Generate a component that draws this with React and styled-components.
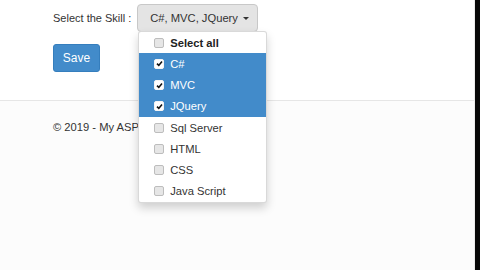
import styled, { createGlobalStyle } from "styled-components"

const skills = [
  { name: "C#", checked: true },
  { name: "MVC", checked: true },
  { name: "JQuery", checked: true },
  { name: "Sql Server", checked: false },
  { name: "HTML", checked: false },
  { name: "CSS", checked: false },
  { name: "Java Script", checked: false },
]

function Check({ checked }) {
  return (
    <Box $checked={checked}>
      {checked && (
        <svg width="7" height="7" viewBox="0 0 7 7">
          <path d="M1 3.6 L2.8 5.4 L6 1.4" stroke="#111" strokeWidth="1.6" fill="none" />
        </svg>
      )}
    </Box>
  )
}

function App() {
  return (
    <>
      <GlobalStyle />
      <Screen>
        <Page>
          <Top>
            <FormRow>
              <Label>Select the Skill :</Label>
              <SelectWrap>
                <SelectButton>
                  C#, MVC, JQuery <Caret />
                </SelectButton>
                <Menu>
                  <MenuItem>
                    <Check checked={false} />
                    <strong>Select all</strong>
                  </MenuItem>
                  {skills.map((s) => (
                    <MenuItem key={s.name} $active={s.checked}>
                      <Check checked={s.checked} />
                      {s.name}
                    </MenuItem>
                  ))}
                </Menu>
              </SelectWrap>
            </FormRow>
            <SaveButton>Save</SaveButton>
          </Top>
          <Footer>
            <p>© 2019 - My ASP.NET Application</p>
          </Footer>
        </Page>
        <Edge />
      </Screen>
    </>
  )
}

const GlobalStyle = createGlobalStyle`
  body {
    margin: 0;
    font-family: "Liberation Sans", Arial, sans-serif;
    font-size: 11.2px;
    color: #333;
  }
`

const Screen = styled.div`
  display: flex;
  width: 480px;
  height: 270px;
  overflow: hidden;
`

const Page = styled.div`
  flex: 1;
  display: flex;
  flex-direction: column;
  background: #fcfcfc;
  border-right: 1px solid #ececec;
`

const Top = styled.div`
  background: #fff;
  padding: 4px 0 0 53px;
  height: 96px;
  border-bottom: 1px solid #e6e6e6;
`

const FormRow = styled.div`
  display: flex;
  align-items: center;
  gap: 6px;
`

const Label = styled.span`
  font-size: 11px;
  color: #333;
`

const SelectWrap = styled.div`
  position: relative;
`

const SelectButton = styled.div`
  display: flex;
  align-items: center;
  gap: 4px;
  height: 28px;
  box-sizing: border-box;
  padding: 0 12px;
  width: 121px;
  background: #e4e4e4;
  border: 1px solid #c8c8c8;
  border-radius: 4px;
  color: #333;
  white-space: nowrap;
`

const Caret = styled.span`
  width: 0;
  height: 0;
  border-left: 3px solid transparent;
  border-right: 3px solid transparent;
  border-top: 3px solid #333;
  margin-left: 1px;
`

const Menu = styled.div`
  position: absolute;
  top: 27px;
  left: 1px;
  width: 129px;
  box-sizing: border-box;
  background: #fff;
  border: 1px solid rgba(0, 0, 0, 0.15);
  border-radius: 3px;
  box-shadow: 0 5px 10px rgba(0, 0, 0, 0.18);
  z-index: 10;
`

const MenuItem = styled.div`
  display: flex;
  align-items: center;
  gap: 6px;
  height: 21.25px;
  padding-left: 15px;
  background: ${(p) => (p.$active ? "#428bca" : "transparent")};
  color: ${(p) => (p.$active ? "#fff" : "#333")};

  strong {
    color: #222;
  }
`

const Box = styled.span`
  display: flex;
  align-items: center;
  justify-content: center;
  width: 8px;
  height: 8px;
  border: 1px solid ${(p) => (p.$checked ? "#f4f4f4" : "#bdbdbd")};
  border-radius: 2px;
  background: ${(p) => (p.$checked ? "#fff" : "#e6e6e6")};
`

const SaveButton = styled.div`
  display: flex;
  align-items: center;
  justify-content: center;
  margin-top: 12px;
  width: 47px;
  height: 28px;
  background: #428bca;
  border: 1px solid #357ebd;
  box-sizing: border-box;
  border-radius: 3px;
  color: #fff;
  font-size: 12px;
`

const Footer = styled.div`
  padding-left: 53px;

  p {
    margin: 20px 0 0;
    font-size: 11.2px;
    color: #333;
  }
`

const Edge = styled.div`
  width: 5px;
  background: #080808;
`

export default App
